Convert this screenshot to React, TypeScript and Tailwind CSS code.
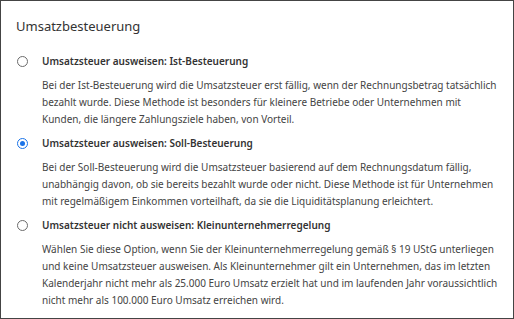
import { useState } from 'react'

interface Option {
  id: string
  label: string
  description: string
}

const options: Option[] = [
  {
    id: 'ist',
    label: 'Umsatzsteuer ausweisen: Ist-Besteuerung',
    description:
      'Bei der Ist-Besteuerung wird die Umsatzsteuer erst fällig, wenn der Rechnungsbetrag tatsächlich bezahlt wurde. Diese Methode ist besonders für kleinere Betriebe oder Unternehmen mit Kunden, die längere Zahlungsziele haben, von Vorteil.',
  },
  {
    id: 'soll',
    label: 'Umsatzsteuer ausweisen: Soll-Besteuerung',
    description:
      'Bei der Soll-Besteuerung wird die Umsatzsteuer basierend auf dem Rechnungsdatum fällig, unabhängig davon, ob sie bereits bezahlt wurde oder nicht. Diese Methode ist für Unternehmen mit regelmäßigem Einkommen vorteilhaft, da sie die Liquiditätsplanung erleichtert.',
  },
  {
    id: 'klein',
    label: 'Umsatzsteuer nicht ausweisen: Kleinunternehmerregelung',
    description:
      'Wählen Sie diese Option, wenn Sie der Kleinunternehmerregelung gemäß § 19 UStG unterliegen und keine Umsatzsteuer ausweisen. Als Kleinunternehmer gilt ein Unternehmen, das im letzten Kalenderjahr nicht mehr als 25.000 Euro Umsatz erzielt hat und im laufenden Jahr voraussichtlich nicht mehr als 100.000 Euro Umsatz erreichen wird.',
  },
]

function Radio({ checked }: { checked: boolean }) {
  return (
    <span
      className={`mt-[2px] flex h-[11px] w-[11px] shrink-0 items-center justify-center rounded-full border-[1.5px] bg-white ${
        checked ? 'border-[#1a73e8]' : 'border-[#6b6b6b]'
      }`}
    >
      {checked && <span className="h-[5px] w-[5px] rounded-full bg-[#1a73e8]" />}
    </span>
  )
}

export default function App() {
  const [selected, setSelected] = useState('soll')

  return (
    <div
      className="h-[319px] w-[514px] overflow-hidden border border-[#444] bg-white text-[#333]"
      style={{ fontFamily: '"Noto Sans", "Open Sans", sans-serif' }}
    >
      <div className="px-[15px] pt-[15px]">
        <h2 className="text-[13px] leading-[20px] text-[#333]">Umsatzbesteuerung</h2>

        <div className="mt-[18px] flex flex-col gap-[8px]">
          {options.map((opt) => (
            <button
              key={opt.id}
              onClick={() => setSelected(opt.id)}
              className="flex w-full gap-[14px] pl-[1px] text-left"
            >
              <Radio checked={selected === opt.id} />
              <div className="flex-1">
                <div className="text-[10px] font-semibold leading-[15px] text-[#333]">
                  {opt.label}
                </div>
                <p className="mt-[8px] text-[10px] leading-[17px] text-[#444]">
                  {opt.description}
                </p>
              </div>
            </button>
          ))}
        </div>
      </div>
    </div>
  )
}
